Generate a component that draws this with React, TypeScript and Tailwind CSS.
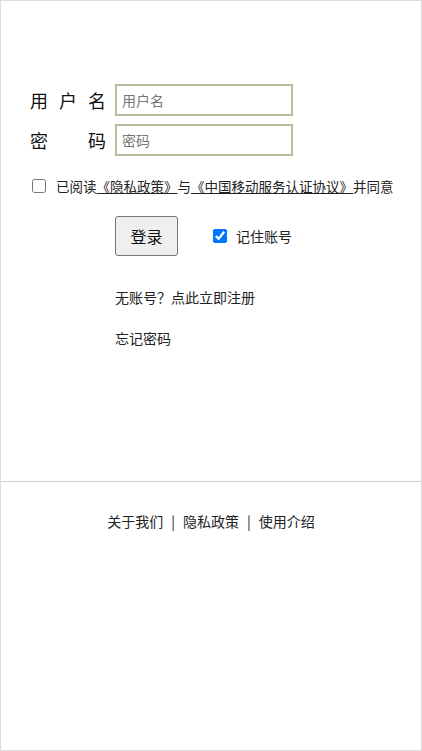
import React from "react"

const font = { fontFamily: '"Noto Sans CJK SC", "Noto Sans", sans-serif' }

function Label({ chars }: { chars: string[] }) {
  return (
    <div className="flex w-[76px] justify-between text-[18px] leading-none text-[#111]">
      {chars.map((c) => (
        <span key={c}>{c}</span>
      ))}
    </div>
  )
}

export default function App() {
  return (
    <div
      className="h-[751px] w-full border border-[#dcdcdc] bg-white text-[#222]"
      style={font}
    >
      <div className="h-[480px] pt-[83px] pl-[29px]">
        <div className="flex h-[32px] items-center">
          <Label chars={["用", "户", "名"]} />
          <input
            className="ml-[9px] h-[32px] w-[178px] border-2 border-[#b7bd9f] px-[5px] text-[14px] outline-none placeholder:text-[#777]"
            placeholder="用户名"
          />
        </div>
        <div className="mt-[8px] flex h-[32px] items-center">
          <Label chars={["密", "码"]} />
          <input
            type="password"
            className="ml-[9px] h-[32px] w-[178px] border-2 border-[#b7bd9f] px-[5px] text-[14px] outline-none placeholder:text-[#777]"
            placeholder="密码"
          />
        </div>

        <div className="mt-[20px] flex h-[20px] items-center text-[13.5px] whitespace-nowrap">
          <input type="checkbox" className="ml-[2px] h-[14px] w-[14px]" />
          <span className="ml-[10px]">
            已阅读<a className="underline decoration-[#222]">《隐私政策》</a>与<a className="underline decoration-[#222]">《中国移动服务认证协议》</a>并同意
          </span>
        </div>

        <div className="mt-[20px] flex items-center">
          <button className="ml-[85px] h-[40px] w-[63px] rounded-[3px] border border-[#767676] bg-[#efefef] text-[16px] text-[#111]">
            登录
          </button>
          <label className="ml-[35px] flex items-center text-[14px]">
            <input type="checkbox" defaultChecked className="h-[14px] w-[14px]" />
            <span className="ml-[9px]">记住账号</span>
          </label>
        </div>

        <p className="mt-[31px] ml-[85px] text-[14px] leading-[20px]">无账号？点此立即注册</p>
        <p className="mt-[21px] ml-[85px] text-[14px] leading-[20px]">忘记密码</p>
      </div>

      <div className="border-t border-[#cfcfcf] pt-[29px]">
        <div className="flex justify-center text-[14px] leading-[20px]">
          <a>关于我们</a>
          <span className="mx-[8px] text-[#222]">|</span>
          <a>隐私政策</a>
          <span className="mx-[8px] text-[#222]">|</span>
          <a>使用介绍</a>
        </div>
      </div>
    </div>
  )
}
